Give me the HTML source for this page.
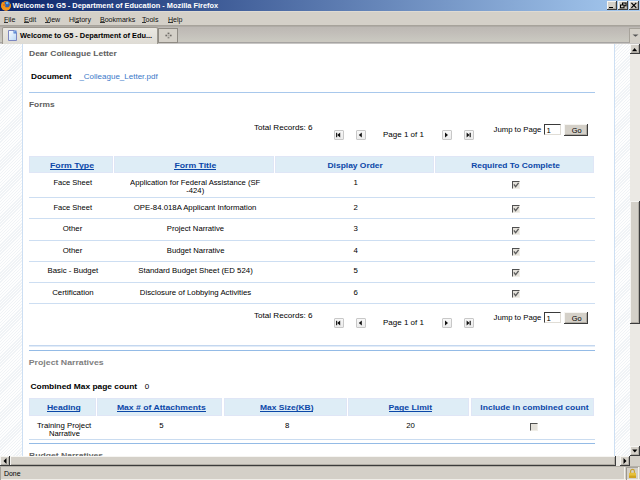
<!DOCTYPE html>
<html><head><meta charset="utf-8">
<style>
*{margin:0;padding:0;box-sizing:border-box}
html,body{width:640px;height:480px;overflow:hidden;background:#fff;font-family:"Liberation Sans",sans-serif}
.a{position:absolute}
.t{position:absolute;white-space:nowrap;line-height:1}
.hatch{background:repeating-linear-gradient(-45deg,#fefefe 0 1.2px,#f0f3f6 1.2px 2.2px)}
.hdr{position:absolute;background:#deedf6;box-shadow:inset 0 0 0 1px #dfe6f6}
.pb{position:absolute;width:10px;height:10px;border:1px solid #c8c8c8;border-radius:1px;background:linear-gradient(#f8f8f8,#ececec)}
.cb{position:absolute;width:8px;height:8px;background:#e4e1da;border-top:1px solid #505050;border-left:1px solid #505050;border-right:1px solid #f0eee8;border-bottom:1px solid #f0eee8}
u{text-decoration:underline}
.mu u{text-underline-offset:0.5px}
</style></head><body>

<div class="a" style="left:0px;top:0px;width:640px;height:11px;background:linear-gradient(90deg,#0a246a 0%,#a6caf0 100%)"></div>
<svg class="a" style="left:0px;top:0px" width="12" height="11" viewBox="0 0 12 11"><circle cx="6" cy="5.9" r="4.8" fill="#ee8412"/><circle cx="6.9" cy="4.4" r="2.9" fill="#2d63b8"/><circle cx="7.2" cy="3" r="1.3" fill="#6ab8f0"/><path d="M2 2 Q3.5 3 4.5 3.2 Q5.5 4 5.5 5.5 Q4.5 7 6 8 Q8 8.5 9.6 6.5 Q10.5 4.5 9.5 2.5 Q11.2 4.5 10.8 6.8 Q9.5 10.5 6 10.6 Q2 10.4 1.2 6.5 Q1 4 2 2Z" fill="#f39418"/><circle cx="4" cy="5" r="0.7" fill="#c83010"/></svg>
<div class="t" style="left:12.5px;top:2px;font-size:7.4px;font-weight:bold;color:#fff;">Welcome to G5 - Department of Education - Mozilla Firefox</div>
<div class="a" style="left:607px;top:1px;width:10px;height:9px;background:#d4d0c8;box-shadow:inset -1px -1px #3c3c3c, inset 1px 1px #f6f5f2, inset -2px -2px #b0aca4"></div>
<div class="a" style="left:617.5px;top:1px;width:10px;height:9px;background:#d4d0c8;box-shadow:inset -1px -1px #3c3c3c, inset 1px 1px #f6f5f2, inset -2px -2px #b0aca4"></div>
<div class="a" style="left:628.5px;top:1px;width:10px;height:9px;background:#d4d0c8;box-shadow:inset -1px -1px #3c3c3c, inset 1px 1px #f6f5f2, inset -2px -2px #b0aca4"></div>
<div class="a" style="left:609px;top:7px;width:4px;height:1.3px;background:#000"></div>
<svg class="a" style="left:617.5px;top:1px" width="10" height="9" viewBox="0 0 10 9"><rect x="4.5" y="2" width="3.5" height="2.8" fill="none" stroke="#000" stroke-width="1"/><rect x="2.5" y="4" width="3.5" height="2.8" fill="#d4d0c8" stroke="#000" stroke-width="1"/></svg>
<svg class="a" style="left:628.5px;top:1px" width="10" height="9" viewBox="0 0 10 9"><path d="M2.4 1.9 L7.3 6.9 M7.3 1.9 L2.4 6.9" stroke="#000" stroke-width="1.25"/></svg>
<div class="a" style="left:0px;top:11px;width:640px;height:15px;background:#d4d0c8;border-top:1px solid #dedad3;border-bottom:1px solid #a7a39b"></div>
<div class="t mu" style="left:4.0px;top:15.5px;font-size:7.05px;font-weight:normal;color:#111;z-index:1">File</div>
<div class="t mu" style="left:24.0px;top:15.5px;font-size:7.05px;font-weight:normal;color:#111;z-index:1">Edit</div>
<div class="t mu" style="left:45.0px;top:15.5px;font-size:7.05px;font-weight:normal;color:#111;z-index:1">View</div>
<div class="t mu" style="left:69.0px;top:15.5px;font-size:7.05px;font-weight:normal;color:#111;z-index:1">History</div>
<div class="t mu" style="left:100.0px;top:15.5px;font-size:7.05px;font-weight:normal;color:#111;z-index:1">Bookmarks</div>
<div class="t mu" style="left:142.0px;top:15.5px;font-size:7.05px;font-weight:normal;color:#111;z-index:1">Tools</div>
<div class="t mu" style="left:168.0px;top:15.5px;font-size:7.05px;font-weight:normal;color:#111;z-index:1">Help</div>
<div class="a" style="left:4px;top:22px;width:4px;height:1px;background:#333"></div>
<div class="a" style="left:24px;top:22px;width:5px;height:1px;background:#333"></div>
<div class="a" style="left:45px;top:22px;width:5px;height:1px;background:#333"></div>
<div class="a" style="left:75px;top:22px;width:4px;height:1px;background:#333"></div>
<div class="a" style="left:100px;top:22px;width:5px;height:1px;background:#333"></div>
<div class="a" style="left:142px;top:22px;width:4px;height:1px;background:#333"></div>
<div class="a" style="left:168px;top:22px;width:5px;height:1px;background:#333"></div>
<div class="a" style="left:0px;top:26px;width:640px;height:18px;background:linear-gradient(#a8a49e 0,#bdb9b4 1.5px,#c2beb9 7px,#c9c8c0 14px,#ccc8c0 16px)"></div>
<div class="a" style="left:0px;top:42px;width:640px;height:1px;background:#a6a4a2"></div>
<div class="a" style="left:0px;top:43px;width:640px;height:1px;background:#c8c6c4"></div>
<div class="a" style="left:2px;top:27px;width:156px;height:17px;background:linear-gradient(#eae8e2,#dedbd4);border:1px solid #9c988f;border-bottom:none;border-radius:2px 2px 0 0"></div>
<svg class="a" style="left:8px;top:30px" width="9" height="11" viewBox="0 0 9 11"><defs><linearGradient id="pg" x1="0" y1="0" x2="1" y2="1"><stop offset="0" stop-color="#fbfdff"/><stop offset="1" stop-color="#b9d8f6"/></linearGradient></defs><path d="M0.5 0.5 H6 L8.5 3 V10.5 H0.5Z" fill="url(#pg)" stroke="#7c86c0"/><rect x="5.5" y="0.5" width="3" height="3" fill="#4f7fd0"/><rect x="6.3" y="1.3" width="1" height="1" fill="#cfe0ff"/></svg>
<div class="t" style="left:20px;top:32px;font-size:7.4px;font-weight:bold;color:#000;">Welcome to G5 - Department of Edu...</div>
<div class="a" style="left:158px;top:28px;width:20px;height:15px;background:#d4d0c8;border:1px solid #8f8b84"></div>
<svg class="a" style="left:164px;top:31px" width="9" height="9" viewBox="0 0 9 9"><rect x="3.6" y="1.6" width="1.8" height="1.6" fill="#6e6b66"/><rect x="3.6" y="5.8" width="1.8" height="1.6" fill="#8a8782"/><rect x="1.4" y="3.7" width="1.8" height="1.6" fill="#6e6b66"/><rect x="5.8" y="3.7" width="1.8" height="1.6" fill="#6e6b66"/><rect x="3.8" y="3.8" width="1.4" height="1.4" fill="#b4b0a8"/></svg>
<div class="a" style="left:629px;top:28px;width:11px;height:15px;background:#d4d0c8;border:1px solid #a7a39b;border-right:none;border-bottom:none"></div>
<svg class="a" style="left:632px;top:34px" width="7" height="3" viewBox="0 0 7 3"><path d="M0.5 0.5 H6.5 L3.5 2.8Z" fill="#555"/></svg>
<div class="a hatch" style="left:0px;top:44px;width:22px;height:412px;"></div>
<div class="a" style="left:22px;top:44px;width:1px;height:412px;background:#cddff3"></div>
<div class="a" style="left:614px;top:44px;width:1px;height:412px;background:#cddff3"></div>
<div class="a hatch" style="left:615px;top:44px;width:15px;height:412px;"></div>
<div class="t" style="left:29px;top:49px;font-size:8.5px;font-weight:bold;color:#5e5e5e;transform:scaleY(0.87);transform-origin:0 6.80px;">Dear Colleague Letter</div>
<div class="t" style="left:31px;top:72px;font-size:8.3px;font-weight:bold;color:#000;transform:scaleY(0.87);transform-origin:0 6.64px;">Document</div>
<div class="t" style="left:79.4px;top:73px;font-size:8.0px;font-weight:normal;color:#3b79c9;transform:scaleY(0.87);transform-origin:0 6.40px;">_Colleague_Letter.pdf</div>
<div class="a" style="left:29px;top:92px;width:566px;height:1px;background:#a8c8ec"></div>
<div class="t" style="left:29px;top:100px;font-size:8.4px;font-weight:bold;color:#5e5e5e;transform:scaleY(0.87);transform-origin:0 6.72px;">Forms</div>
<div class="t" style="left:254px;top:124px;font-size:8.1px;font-weight:normal;color:#000;transform:scaleY(0.88);transform-origin:0 6.48px;">Total Records: 6</div>
<div class="pb" style="left:334px;top:130px;width:10px;height:10px;"></div>
<div class="pb" style="left:356px;top:130px;width:10px;height:10px;"></div>
<div class="pb" style="left:442px;top:130px;width:10px;height:10px;"></div>
<div class="pb" style="left:464px;top:130px;width:10px;height:10px;"></div>
<svg class="a" style="left:334px;top:130px" width="10" height="10" viewBox="0 0 10 10"><rect x="2" y="2.8" width="1.2" height="4.4" fill="#222"/><path d="M6.2 2.5 L3.2 5 L6.2 7.5Z" fill="#111"/></svg>
<svg class="a" style="left:356px;top:130px" width="10" height="10" viewBox="0 0 10 10"><path d="M5.8 2.5 L2.8 5 L5.8 7.5Z" fill="#111"/></svg>
<svg class="a" style="left:442px;top:130px" width="10" height="10" viewBox="0 0 10 10"><path d="M3 2.5 L6 5 L3 7.5Z" fill="#111"/></svg>
<svg class="a" style="left:464px;top:130px" width="10" height="10" viewBox="0 0 10 10"><path d="M2.6 2.5 L5.6 5 L2.6 7.5Z" fill="#111"/><rect x="5.6" y="2.8" width="1.2" height="4.4" fill="#222"/></svg>
<div class="t" style="left:383px;top:131px;font-size:8.0px;font-weight:normal;color:#000;transform:scaleY(0.88);transform-origin:0 6.40px;">Page 1 of 1</div>
<div class="t" style="left:493.5px;top:126px;font-size:7.75px;font-weight:normal;color:#000;transform:scaleY(0.88);transform-origin:0 6.20px;">Jump to Page</div>
<div class="a" style="left:544px;top:124px;width:17px;height:11px;background:#fff;border-top:1px solid #3a3a3a;border-left:1px solid #3a3a3a;border-right:1px solid #e0ddd6;border-bottom:1px solid #e0ddd6"></div>
<div class="t" style="left:546.5px;top:127px;font-size:7.8px;font-weight:normal;color:#000;transform:scaleY(0.88);transform-origin:0 6.24px;">1</div>
<div class="a" style="left:564px;top:124px;width:24px;height:12px;background:#d4d0c8;box-shadow:inset -1px -1px #3c3c3c, inset 1px 1px #f6f5f2, inset -2px -2px #b0aca4"></div>
<div class="t" style="left:571.7px;top:127px;font-size:7.4px;font-weight:normal;color:#000;transform:scaleY(0.9);transform-origin:0 5.92px;">Go</div>
<div class="hdr" style="left:29px;top:156px;width:84px;height:17px"></div>
<div class="hdr" style="left:114px;top:156px;width:160px;height:17px"></div>
<div class="hdr" style="left:275px;top:156px;width:159px;height:17px"></div>
<div class="hdr" style="left:435px;top:156px;width:159px;height:17px"></div>
<div class="t" style="left:50px;top:161px;font-size:8.75px;font-weight:bold;color:#0b47a8;transform:scaleY(0.85);transform-origin:0 7.00px;">Form Type</div>
<div class="t" style="left:174.4px;top:161px;font-size:8.7px;font-weight:bold;color:#0b47a8;transform:scaleY(0.85);transform-origin:0 6.96px;">Form Title</div>
<div class="t" style="left:327.5px;top:161px;font-size:8.45px;font-weight:bold;color:#0b47a8;transform:scaleY(0.85);transform-origin:0 6.76px;">Display Order</div>
<div class="t" style="left:471.2px;top:161px;font-size:8.4px;font-weight:bold;color:#0b47a8;transform:scaleY(0.85);transform-origin:0 6.72px;">Required To Complete</div>
<div class="a" style="left:50px;top:169px;width:44px;height:1px;background:#0b47a8"></div>
<div class="a" style="left:174px;top:169px;width:42px;height:1px;background:#0b47a8"></div>
<div class="t" style="left:53.4px;top:179.2px;font-size:7.55px;font-weight:normal;color:#000;transform:scaleY(0.86);transform-origin:0 6.04px;">Face Sheet</div>
<div class="t" style="left:130px;top:179.2px;font-size:7.7px;font-weight:normal;color:#000;transform:scaleY(0.86);transform-origin:0 6.16px;">Application for Federal Assistance (SF</div>
<div class="t" style="left:186.25px;top:186.5px;font-size:7.7px;font-weight:normal;color:#000;transform:scaleY(0.86);transform-origin:0 6.16px;">-424)</div>
<div class="t" style="left:353.5px;top:179.2px;font-size:7.8px;font-weight:normal;color:#000;transform:scaleY(0.86);transform-origin:0 6.24px;">1</div>
<div class="cb" style="left:512px;top:181px;width:8px;height:8px;"></div>
<svg class="a" style="left:513px;top:182px" width="7" height="7" viewBox="0 0 7 7"><path d="M0.9 2.4 L2.6 4.6 L5.6 0.8" fill="none" stroke="#5a5a5a" stroke-width="1.3"/></svg>
<div class="t" style="left:53.4px;top:203.5px;font-size:7.55px;font-weight:normal;color:#000;transform:scaleY(0.86);transform-origin:0 6.04px;">Face Sheet</div>
<div class="t" style="left:133.75px;top:203.5px;font-size:7.8px;font-weight:normal;color:#000;transform:scaleY(0.86);transform-origin:0 6.24px;">OPE-84.018A Applicant Information</div>
<div class="t" style="left:353.5px;top:203.5px;font-size:7.8px;font-weight:normal;color:#000;transform:scaleY(0.86);transform-origin:0 6.24px;">2</div>
<div class="cb" style="left:512px;top:205px;width:8px;height:8px;"></div>
<svg class="a" style="left:513px;top:206px" width="7" height="7" viewBox="0 0 7 7"><path d="M0.9 2.4 L2.6 4.6 L5.6 0.8" fill="none" stroke="#5a5a5a" stroke-width="1.3"/></svg>
<div class="t" style="left:62.8px;top:225.2px;font-size:7.8px;font-weight:normal;color:#000;transform:scaleY(0.86);transform-origin:0 6.24px;">Other</div>
<div class="t" style="left:166.8px;top:225.2px;font-size:7.7px;font-weight:normal;color:#000;transform:scaleY(0.86);transform-origin:0 6.16px;">Project Narrative</div>
<div class="t" style="left:353.5px;top:225.2px;font-size:7.8px;font-weight:normal;color:#000;transform:scaleY(0.86);transform-origin:0 6.24px;">3</div>
<div class="cb" style="left:512px;top:227px;width:8px;height:8px;"></div>
<svg class="a" style="left:513px;top:228px" width="7" height="7" viewBox="0 0 7 7"><path d="M0.9 2.4 L2.6 4.6 L5.6 0.8" fill="none" stroke="#5a5a5a" stroke-width="1.3"/></svg>
<div class="t" style="left:62.8px;top:246.5px;font-size:7.8px;font-weight:normal;color:#000;transform:scaleY(0.86);transform-origin:0 6.24px;">Other</div>
<div class="t" style="left:166.8px;top:246.5px;font-size:7.7px;font-weight:normal;color:#000;transform:scaleY(0.86);transform-origin:0 6.16px;">Budget Narrative</div>
<div class="t" style="left:353.5px;top:246.5px;font-size:7.8px;font-weight:normal;color:#000;transform:scaleY(0.86);transform-origin:0 6.24px;">4</div>
<div class="cb" style="left:512px;top:248px;width:8px;height:8px;"></div>
<svg class="a" style="left:513px;top:249px" width="7" height="7" viewBox="0 0 7 7"><path d="M0.9 2.4 L2.6 4.6 L5.6 0.8" fill="none" stroke="#5a5a5a" stroke-width="1.3"/></svg>
<div class="t" style="left:47.5px;top:267.3px;font-size:7.8px;font-weight:normal;color:#000;transform:scaleY(0.86);transform-origin:0 6.24px;">Basic - Budget</div>
<div class="t" style="left:138.3px;top:267.3px;font-size:7.8px;font-weight:normal;color:#000;transform:scaleY(0.86);transform-origin:0 6.24px;">Standard Budget Sheet (ED 524)</div>
<div class="t" style="left:353.5px;top:267.3px;font-size:7.8px;font-weight:normal;color:#000;transform:scaleY(0.86);transform-origin:0 6.24px;">5</div>
<div class="cb" style="left:512px;top:269px;width:8px;height:8px;"></div>
<svg class="a" style="left:513px;top:270px" width="7" height="7" viewBox="0 0 7 7"><path d="M0.9 2.4 L2.6 4.6 L5.6 0.8" fill="none" stroke="#5a5a5a" stroke-width="1.3"/></svg>
<div class="t" style="left:52.2px;top:289px;font-size:7.85px;font-weight:normal;color:#000;transform:scaleY(0.86);transform-origin:0 6.28px;">Certification</div>
<div class="t" style="left:139.8px;top:289.0px;font-size:7.8px;font-weight:normal;color:#000;transform:scaleY(0.86);transform-origin:0 6.24px;">Disclosure of Lobbying Activities</div>
<div class="t" style="left:353.5px;top:289px;font-size:7.8px;font-weight:normal;color:#000;transform:scaleY(0.86);transform-origin:0 6.24px;">6</div>
<div class="cb" style="left:512px;top:290px;width:8px;height:8px;"></div>
<svg class="a" style="left:513px;top:291px" width="7" height="7" viewBox="0 0 7 7"><path d="M0.9 2.4 L2.6 4.6 L5.6 0.8" fill="none" stroke="#5a5a5a" stroke-width="1.3"/></svg>
<div class="a" style="left:29px;top:197px;width:566px;height:1px;background:#cddef2"></div>
<div class="a" style="left:29px;top:218px;width:566px;height:1px;background:#cddef2"></div>
<div class="a" style="left:29px;top:239.5px;width:566px;height:1px;background:#cddef2"></div>
<div class="a" style="left:29px;top:261px;width:566px;height:1px;background:#cddef2"></div>
<div class="a" style="left:29px;top:282px;width:566px;height:1px;background:#cddef2"></div>
<div class="a" style="left:29px;top:303px;width:566px;height:1px;background:#cddef2"></div>
<div class="t" style="left:254px;top:312px;font-size:8.1px;font-weight:normal;color:#000;transform:scaleY(0.88);transform-origin:0 6.48px;">Total Records: 6</div>
<div class="pb" style="left:334px;top:318px;width:10px;height:10px;"></div>
<div class="pb" style="left:356px;top:318px;width:10px;height:10px;"></div>
<div class="pb" style="left:442px;top:318px;width:10px;height:10px;"></div>
<div class="pb" style="left:464px;top:318px;width:10px;height:10px;"></div>
<svg class="a" style="left:334px;top:318px" width="10" height="10" viewBox="0 0 10 10"><rect x="2" y="2.8" width="1.2" height="4.4" fill="#222"/><path d="M6.2 2.5 L3.2 5 L6.2 7.5Z" fill="#111"/></svg>
<svg class="a" style="left:356px;top:318px" width="10" height="10" viewBox="0 0 10 10"><path d="M5.8 2.5 L2.8 5 L5.8 7.5Z" fill="#111"/></svg>
<svg class="a" style="left:442px;top:318px" width="10" height="10" viewBox="0 0 10 10"><path d="M3 2.5 L6 5 L3 7.5Z" fill="#111"/></svg>
<svg class="a" style="left:464px;top:318px" width="10" height="10" viewBox="0 0 10 10"><path d="M2.6 2.5 L5.6 5 L2.6 7.5Z" fill="#111"/><rect x="5.6" y="2.8" width="1.2" height="4.4" fill="#222"/></svg>
<div class="t" style="left:383px;top:319px;font-size:8.0px;font-weight:normal;color:#000;transform:scaleY(0.88);transform-origin:0 6.40px;">Page 1 of 1</div>
<div class="t" style="left:493.5px;top:314px;font-size:7.75px;font-weight:normal;color:#000;transform:scaleY(0.88);transform-origin:0 6.20px;">Jump to Page</div>
<div class="a" style="left:544px;top:312px;width:17px;height:11px;background:#fff;border-top:1px solid #3a3a3a;border-left:1px solid #3a3a3a;border-right:1px solid #e0ddd6;border-bottom:1px solid #e0ddd6"></div>
<div class="t" style="left:546.5px;top:315px;font-size:7.8px;font-weight:normal;color:#000;transform:scaleY(0.88);transform-origin:0 6.24px;">1</div>
<div class="a" style="left:564px;top:312px;width:24px;height:12px;background:#d4d0c8;box-shadow:inset -1px -1px #3c3c3c, inset 1px 1px #f6f5f2, inset -2px -2px #b0aca4"></div>
<div class="t" style="left:571.7px;top:315px;font-size:7.4px;font-weight:normal;color:#000;transform:scaleY(0.9);transform-origin:0 5.92px;">Go</div>
<div class="a" style="left:29px;top:345px;width:566px;height:1px;background:#c4d7ef"></div>
<div class="a" style="left:29px;top:346px;width:566px;height:1px;background:#e2ecf8"></div>
<div class="a" style="left:29px;top:350px;width:566px;height:1px;background:#94bbe6"></div>
<div class="t" style="left:28.75px;top:358px;font-size:8.75px;font-weight:bold;color:#808080;transform:scaleY(0.86);transform-origin:0 7.00px;">Project Narratives</div>
<div class="t" style="left:30.5px;top:382px;font-size:8.4px;font-weight:bold;color:#000;transform:scaleY(0.87);transform-origin:0 6.72px;">Combined Max page count</div>
<div class="t" style="left:144.8px;top:383px;font-size:8.0px;font-weight:normal;color:#000;transform:scaleY(0.92);transform-origin:0 6.40px;">0</div>
<div class="hdr" style="left:29px;top:398px;width:67px;height:18px"></div>
<div class="hdr" style="left:97px;top:398px;width:125px;height:18px"></div>
<div class="hdr" style="left:224px;top:398px;width:123px;height:18px"></div>
<div class="hdr" style="left:348px;top:398px;width:121px;height:18px"></div>
<div class="hdr" style="left:471px;top:398px;width:123px;height:18px"></div>
<div class="t" style="left:46.9px;top:403px;font-size:8.6px;font-weight:bold;color:#0b47a8;transform:scaleY(0.85);transform-origin:0 6.88px;">Heading</div>
<div class="t" style="left:116.9px;top:403px;font-size:8.65px;font-weight:bold;color:#0b47a8;transform:scaleY(0.85);transform-origin:0 6.92px;">Max # of Attachments</div>
<div class="t" style="left:260px;top:403px;font-size:8.45px;font-weight:bold;color:#0b47a8;transform:scaleY(0.85);transform-origin:0 6.76px;">Max Size(KB)</div>
<div class="t" style="left:388.6px;top:403px;font-size:8.6px;font-weight:bold;color:#0b47a8;transform:scaleY(0.85);transform-origin:0 6.88px;">Page Limit</div>
<div class="t" style="left:480.3px;top:403px;font-size:8.55px;font-weight:bold;color:#0b47a8;transform:scaleY(0.85);transform-origin:0 6.84px;">Include in combined count</div>
<div class="a" style="left:47px;top:411px;width:33px;height:1px;background:#0b47a8"></div>
<div class="a" style="left:117px;top:411px;width:89px;height:1px;background:#0b47a8"></div>
<div class="a" style="left:260px;top:411px;width:53px;height:1px;background:#0b47a8"></div>
<div class="a" style="left:389px;top:411px;width:43px;height:1px;background:#0b47a8"></div>
<div class="t" style="left:36.9px;top:422px;font-size:7.8px;font-weight:normal;color:#000;transform:scaleY(0.86);transform-origin:0 6.24px;">Training Project</div>
<div class="t" style="left:48.9px;top:429.5px;font-size:7.65px;font-weight:normal;color:#000;transform:scaleY(0.86);transform-origin:0 6.12px;">Narrative</div>
<div class="t" style="left:159.2px;top:422px;font-size:7.8px;font-weight:normal;color:#000;transform:scaleY(0.86);transform-origin:0 6.24px;">5</div>
<div class="t" style="left:285px;top:422px;font-size:7.8px;font-weight:normal;color:#000;transform:scaleY(0.86);transform-origin:0 6.24px;">8</div>
<div class="t" style="left:406.2px;top:422px;font-size:7.8px;font-weight:normal;color:#000;transform:scaleY(0.86);transform-origin:0 6.24px;">20</div>
<div class="cb" style="left:530px;top:423px;width:8px;height:8px;"></div>
<div class="a" style="left:29px;top:439px;width:566px;height:1px;background:#cadcf0"></div>
<div class="a" style="left:29px;top:443px;width:566px;height:1px;background:#94bbe6"></div>
<div class="t" style="left:29px;top:451.4px;font-size:8.6px;font-weight:bold;color:#666;transform:scaleY(0.86);transform-origin:0 6.88px;">Budget Narratives</div>
<div class="a" style="left:630px;top:44px;width:10px;height:412px;background:#ebe9e4"></div>
<div class="a" style="left:630px;top:44px;width:10px;height:10px;background:#d4d0c8;box-shadow:inset -1px -1px #3c3c3c, inset 1px 1px #f6f5f2, inset -2px -2px #b0aca4"></div>
<svg class="a" style="left:630px;top:44px" width="10" height="10" viewBox="0 0 10 10"><path d="M2 7.2 L4.6 4 L7.2 7.2Z" fill="#000"/></svg>
<div class="a" style="left:630px;top:201px;width:10px;height:123px;background:#d4d0c8;box-shadow:inset -1px -1px #3c3c3c, inset 1px 1px #f6f5f2, inset -2px -2px #b0aca4"></div>
<div class="a" style="left:630px;top:446px;width:10px;height:10px;background:#d4d0c8;box-shadow:inset -1px -1px #3c3c3c, inset 1px 1px #f6f5f2, inset -2px -2px #b0aca4"></div>
<svg class="a" style="left:630px;top:446px" width="10" height="10" viewBox="0 0 10 10"><path d="M2.2 3.6 L4.8 6.6 L7.4 3.6Z" fill="#000"/></svg>
<div class="a" style="left:0px;top:456px;width:640px;height:10px;background:#ebe9e4"></div>
<div class="a" style="left:0px;top:456px;width:10px;height:10px;background:#d4d0c8;box-shadow:inset -1px -1px #3c3c3c, inset 1px 1px #f6f5f2, inset -2px -2px #b0aca4"></div>
<svg class="a" style="left:0px;top:456px" width="10" height="10" viewBox="0 0 10 10"><path d="M6.5 2 L3.5 5 L6.5 8Z" fill="#000"/></svg>
<div class="a" style="left:10px;top:456px;width:606px;height:10px;background:#d4d0c8;box-shadow:inset -1px -1px #3c3c3c, inset 1px 1px #f6f5f2, inset -2px -2px #b0aca4"></div>
<div class="a" style="left:620px;top:456px;width:10px;height:10px;background:#d4d0c8;box-shadow:inset -1px -1px #3c3c3c, inset 1px 1px #f6f5f2, inset -2px -2px #b0aca4"></div>
<svg class="a" style="left:620px;top:456px" width="10" height="10" viewBox="0 0 10 10"><path d="M3.5 2 L6.5 5 L3.5 8Z" fill="#000"/></svg>
<div class="a" style="left:630px;top:456px;width:10px;height:10px;background:#d4d0c8"></div>
<div class="a" style="left:0px;top:466px;width:640px;height:14px;background:#d4d0c8;border-top:1px solid #b4b0a8;border-bottom:1px solid #f0eee8"></div>
<div class="a" style="left:0px;top:467px;width:1px;height:13px;background:#a7a39b"></div>
<div class="t" style="left:4px;top:471px;font-size:6.95px;font-weight:normal;color:#000;">Done</div>
<div class="a" style="left:624px;top:467px;width:1px;height:13px;background:#f4f3ef"></div>
<div class="a" style="left:626px;top:467px;width:1px;height:13px;background:#9a968e"></div>
<div class="a" style="left:626px;top:467px;width:13px;height:1px;background:#a7a39b"></div>
<div class="a" style="left:638px;top:467px;width:1px;height:13px;background:#f4f3ef"></div>
<svg class="a" style="left:628px;top:468px" width="9" height="11" viewBox="0 0 9 11"><path d="M2.6 5 V3.3 A1.9 1.9 0 0 1 6.4 3.3 V5" fill="none" stroke="#c8a030" stroke-width="1.1"/><rect x="1" y="4.8" width="7" height="5.2" rx="0.6" fill="#e6c03a"/><rect x="1" y="7.6" width="7" height="2.4" fill="#d0a420"/></svg>
</body></html>
